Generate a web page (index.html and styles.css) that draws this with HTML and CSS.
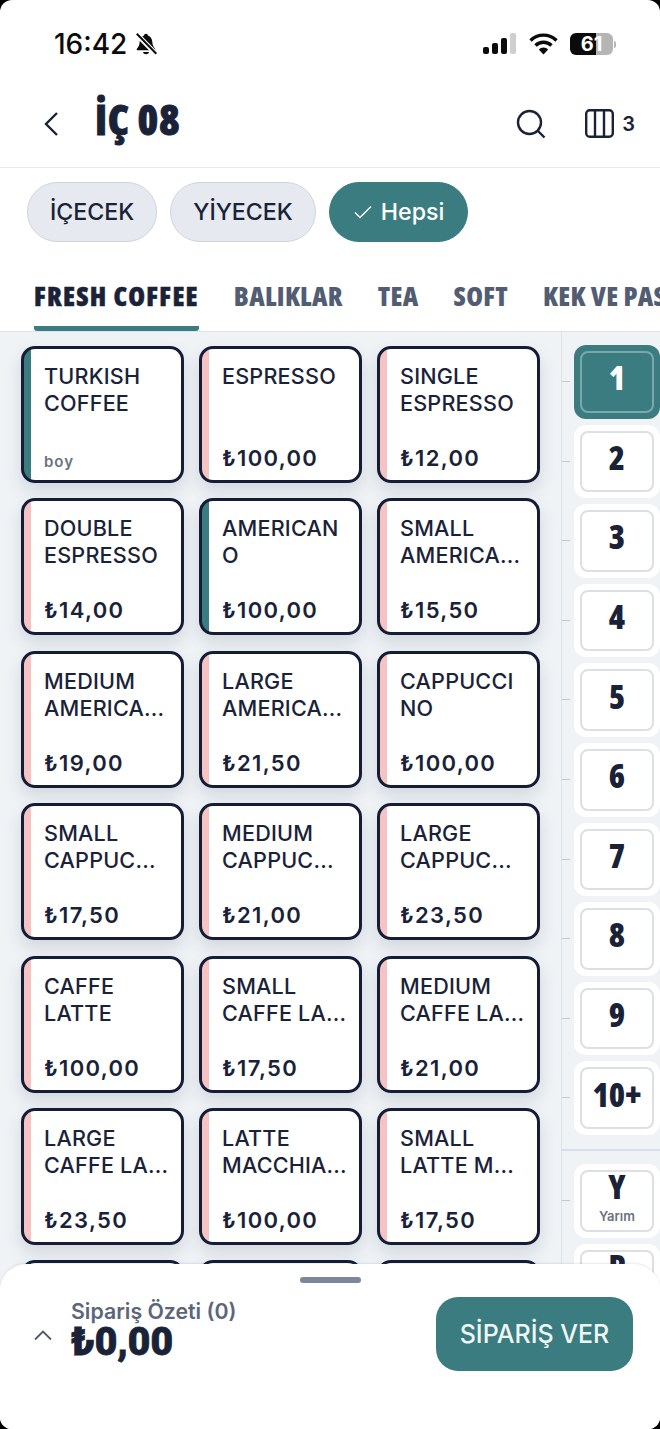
FILE: index.html
```html
<!DOCTYPE html>
<html>
<head>
    <meta charset="UTF-8">
    <title>İç 08</title>
    <link rel="stylesheet" href="styles.css">
</head>
<body>
<div class="phone">
    <div class="status-bar">
        <div class="status-left">
            <span class="time">16:42</span>
            <svg class="bell" width="26" height="26" viewBox="0 0 24 24">
                <path d="M12 2.500c-1 0-1.700.7-1.800 1.600C7.600 5 6.400 7.200 6.200 10c-.2 3.200-1 4.800-2.600 6.400-.5.600-.2 1.400.6 1.400h15.600c.8 0 1.100-.8.6-1.400-1.600-1.600-2.400-3.200-2.600-6.400-.2-2.800-1.400-5-4-5.900-.1-.9-.8-1.600-1.800-1.600z" fill="#0b0b0b"/>
                <path d="M9.200 19.400c.3 1.300 1.400 2.100 2.800 2.100s2.500-.8 2.800-2.100z" fill="#0b0b0b"/>
                <path d="M3 2.500 21.500 21.500" stroke="#fff" stroke-width="4.500"/>
                <path d="M3.500 2.500 21.500 21" stroke="#0b0b0b" stroke-width="1.800"/>
            </svg>
        </div>
        <div class="status-right">
            <svg width="35" height="22" viewBox="0 0 35 22">
                <rect x="1" y="14" width="6" height="7" rx="2" fill="#0b0b0b"/>
                <rect x="10" y="10" width="6" height="11" rx="2" fill="#0b0b0b"/>
                <rect x="19" y="5" width="6" height="16" rx="2" fill="#0b0b0b"/>
                <rect x="28" y="0" width="6" height="21" rx="2" fill="#cfcfcf"/>
            </svg>
            <svg width="29" height="22" viewBox="0 0 29 22">
                <path d="M1.500 7.500a18.500 18.500 0 0 1 26 0" fill="none" stroke="#0b0b0b" stroke-width="3.400"/>
                <path d="M6.500 12.500a11.500 11.500 0 0 1 16 0" fill="none" stroke="#0b0b0b" stroke-width="3.400"/>
                <path d="M14.500 21.500 9.800 16.500a6.800 6.800 0 0 1 9.400 0z" fill="#0b0b0b"/>
            </svg>
            <div class="battery"><span class="battery-level">61</span><i class="battery-tip"></i></div>
        </div>
    </div>

    <div class="top-bar">
        <svg class="back" width="18" height="26" viewBox="0 0 18 26">
            <path d="M14 2 3 13l11 11" fill="none" stroke="#1a2238" stroke-width="2.400"/>
        </svg>
        <h1 class="table-name">İÇ 08</h1>
        <svg class="search" width="30" height="30" viewBox="0 0 30 30">
            <circle cx="13.500" cy="13.500" r="11.500" fill="none" stroke="#1a2238" stroke-width="2.400"/>
            <path d="M22 22l6.500 6.500" stroke="#1a2238" stroke-width="2.400"/>
        </svg>
        <svg class="columns" width="29" height="29" viewBox="0 0 29 29">
            <rect x="1.200" y="1.200" width="26.600" height="26.600" rx="3.500" fill="none" stroke="#1a2238" stroke-width="2.400"/>
            <path d="M10 1v27M19 1v27" stroke="#1a2238" stroke-width="2.400"/>
        </svg>
        <span class="column-count">3</span>
    </div>

    <div class="chips">
        <div class="chip">İÇECEK</div>
        <div class="chip">YİYECEK</div>
        <div class="chip chip-active">
            <svg width="18" height="14" viewBox="0 0 18 14"><path d="M1 7.500 6 12.500 17 1.500" fill="none" stroke="#fff" stroke-width="1.400"/></svg>
            Hepsi
        </div>
    </div>

    <div class="tabs">
        <div class="tab tab-active">FRESH COFFEE</div>
        <div class="tab">BALIKLAR</div>
        <div class="tab">TEA</div>
        <div class="tab">SOFT</div>
        <div class="tab">KEK VE PAS</div>
    </div>

    <div class="content">
        <div class="products">
            <div class="card card-teal"><div class="card-name">TURKISH<br>COFFEE</div><div class="card-note">boy</div></div>
            <div class="card"><div class="card-name">ESPRESSO</div><div class="card-price">₺100,00</div></div>
            <div class="card"><div class="card-name">SINGLE<br>ESPRESSO</div><div class="card-price">₺12,00</div></div>

            <div class="card"><div class="card-name">DOUBLE<br>ESPRESSO</div><div class="card-price">₺14,00</div></div>
            <div class="card card-teal"><div class="card-name">AMERICAN<br>O</div><div class="card-price">₺100,00</div></div>
            <div class="card"><div class="card-name">SMALL<br>AMERICA...</div><div class="card-price">₺15,50</div></div>

            <div class="card"><div class="card-name">MEDIUM<br>AMERICA...</div><div class="card-price">₺19,00</div></div>
            <div class="card"><div class="card-name">LARGE<br>AMERICA...</div><div class="card-price">₺21,50</div></div>
            <div class="card"><div class="card-name">CAPPUCCI<br>NO</div><div class="card-price">₺100,00</div></div>

            <div class="card"><div class="card-name">SMALL<br>CAPPUC...</div><div class="card-price">₺17,50</div></div>
            <div class="card"><div class="card-name">MEDIUM<br>CAPPUC...</div><div class="card-price">₺21,00</div></div>
            <div class="card"><div class="card-name">LARGE<br>CAPPUC...</div><div class="card-price">₺23,50</div></div>

            <div class="card"><div class="card-name">CAFFE<br>LATTE</div><div class="card-price">₺100,00</div></div>
            <div class="card"><div class="card-name">SMALL<br>CAFFE LA...</div><div class="card-price">₺17,50</div></div>
            <div class="card"><div class="card-name">MEDIUM<br>CAFFE LA...</div><div class="card-price">₺21,00</div></div>

            <div class="card"><div class="card-name">LARGE<br>CAFFE LA...</div><div class="card-price">₺23,50</div></div>
            <div class="card"><div class="card-name">LATTE<br>MACCHIA...</div><div class="card-price">₺100,00</div></div>
            <div class="card"><div class="card-name">SMALL<br>LATTE M...</div><div class="card-price">₺17,50</div></div>

            <div class="card"></div>
            <div class="card"></div>
            <div class="card"></div>
        </div>

        <div class="side">
            <div class="qty-group">
                <div class="qty qty-active"><div class="qty-inner">1</div></div>
                <div class="qty"><div class="qty-inner">2</div></div>
                <div class="qty"><div class="qty-inner">3</div></div>
                <div class="qty"><div class="qty-inner">4</div></div>
                <div class="qty"><div class="qty-inner">5</div></div>
                <div class="qty"><div class="qty-inner">6</div></div>
                <div class="qty"><div class="qty-inner">7</div></div>
                <div class="qty"><div class="qty-inner">8</div></div>
                <div class="qty"><div class="qty-inner">9</div></div>
                <div class="qty"><div class="qty-inner">10+</div></div>
            </div>
            <div class="qty-group portions">
                <div class="qty"><div class="qty-inner qty-letter">Y<small>Yarım</small></div></div>
                <div class="qty"><div class="qty-inner qty-letter">P</div></div>
            </div>
        </div>
    </div>

    <div class="sheet">
        <div class="handle"></div>
        <div class="sheet-row">
            <svg class="chevron" width="20" height="12" viewBox="0 0 20 12"><path d="M2 10.500 10 2.500l8 8" fill="none" stroke="#4f5a70" stroke-width="1.800"/></svg>
            <div class="summary">
                <div class="summary-label">Sipariş Özeti (0)</div>
                <div class="summary-total">₺0,00</div>
            </div>
            <div class="order-button">SİPARİŞ VER</div>
        </div>
    </div>
</div>
</body>
</html>
```

FILE: styles.css
```css
html, body {
    margin: 0;
    padding: 0;
    background-color: #000;
}
.phone {
    position: relative;
    width: 660px;
    height: 1429px;
    overflow: hidden;
    border-radius: 12px;
    background-color: #fff;
    font-family: Inter, "Liberation Sans", sans-serif;
    color: #1a2238;
}

/* status bar */
.status-bar {
    display: flex;
    justify-content: space-between;
    align-items: center;
    height: 88px;
    padding: 0 44px 0 54px;
    box-sizing: border-box;
}
.status-left {
    display: flex;
    align-items: center;
    gap: 6px;
}
.time {
    font-size: 28px;
    font-weight: 500;
    color: #0b0b0b;
}
.status-right {
    display: flex;
    align-items: center;
    gap: 12px;
}
.battery {
    display: flex;
    align-items: center;
    gap: 1px;
}
.battery-level {
    width: 43px;
    height: 22px;
    border-radius: 6px;
    background: linear-gradient(to right, #0b0b0b 61%, #b5b5b5 61%);
    color: #fff;
    font-size: 20px;
    font-weight: 700;
    line-height: 22px;
    text-align: center;
}
.battery-tip {
    width: 2px;
    height: 7px;
    border-radius: 0 2px 2px 0;
    background-color: #b5b5b5;
}

/* title row */
.top-bar {
    display: flex;
    align-items: center;
    height: 71px;
    padding: 0 25px 8px 43px;
    border-bottom: 1px solid #e8eaec;
}
.back {
    margin-right: 34px;
}
.table-name {
    flex: 1;
    margin: 0 0 10px;
    font-family: "Open Sans", sans-serif;
    font-stretch: 75%;
    font-size: 42px;
    font-weight: 800;
    line-height: 48px;
    letter-spacing: 0.6px;
    -webkit-text-stroke: 0.8px #1a2238;
}
.search {
    margin-right: 39px;
}
.columns {
    margin-right: 8px;
}
.column-count {
    font-size: 20px;
    font-weight: 600;
}

/* filter chips */
.chips {
    display: flex;
    gap: 13px;
    padding: 14px 27px 0;
}
.chip {
    display: flex;
    align-items: center;
    gap: 9px;
    height: 60px;
    padding: 0 22px;
    box-sizing: border-box;
    border: 1px solid #cfd4dc;
    border-radius: 30px;
    background-color: #e6eaf0;
    font-size: 23.200px;
    font-weight: 500;
}
.chip-active {
    border-color: #3b7c80;
    background-color: #3b7c80;
    color: #fff;
    padding: 0 23px 0 24px;
}

/* category tabs */
.tabs {
    display: flex;
    gap: 35px;
    height: 90px;
    padding-left: 34px;
    box-sizing: border-box;
    overflow: hidden;
    border-bottom: 1px solid #dfe3e8;
    white-space: nowrap;
}
.tab {
    flex: none;
    height: 89px;
    padding-top: 38px;
    box-sizing: border-box;
    font-family: "Open Sans", sans-serif;
    font-stretch: 75%;
    font-size: 27px;
    line-height: 32px;
    font-weight: 800;
    letter-spacing: 0.3px;
    color: #525c72;
}
.tab-active {
    color: #1a2238;
    letter-spacing: 1.250px;
    -webkit-text-stroke: 0.5px #1a2238;
    border-bottom: 5px solid #3b7c80;
    border-radius: 0 0 3px 3px;
}

/* product grid + quantity column */
.content {
    display: flex;
    height: 1097px;
    background-color: #eff3f6;
}
.products {
    display: grid;
    grid-template-columns: repeat(3, 163px);
    grid-auto-rows: 137px;
    gap: 15.400px 15px;
    width: 540px;
    padding: 14px 0 0 21px;
    box-sizing: border-box;
    flex: none;
}
.card {
    display: flex;
    flex-direction: column;
    justify-content: space-between;
    padding: 14px 8px 8px 20px;
    box-sizing: border-box;
    border: 3px solid #141c36;
    border-radius: 14px;
    background: linear-gradient(to right, #f5c3c1 7px, #fff 7px);
    box-shadow: 0 8px 16px rgba(60, 72, 100, 0.16);
}
.card-teal {
    background: linear-gradient(to right, #3b7c80 7px, #fff 7px);
}
.card-name {
    font-size: 21.600px;
    line-height: 27px;
    font-weight: 500;
    letter-spacing: 0.2px;
    white-space: nowrap;
}
.card-price {
    font-size: 22px;
    line-height: 27px;
    font-weight: 600;
    letter-spacing: 1.300px;
}
.card-note {
    font-size: 15px;
    line-height: 20px;
    font-weight: 600;
    letter-spacing: 1px;
    color: #6b7280;
}
.side {
    flex: 1;
    margin-left: 21px;
    padding-top: 13px;
    border-left: 1px solid #e0e4e9;
}
.qty-group {
    display: flex;
    flex-direction: column;
    gap: 6px;
}
.portions {
    margin-top: 14px;
    margin-left: -1px;
    padding-top: 13px;
    border-top: 2px solid #d9dfe8;
}
.qty {
    position: relative;
    width: 86px;
    height: 73.600px;
    margin-left: 12px;
    padding: 6px;
    box-sizing: border-box;
    border-radius: 12px;
    background-color: #fff;
}
.portions .qty {
    margin-left: 13px;
}
.qty::before {
    content: "";
    position: absolute;
    left: -12px;
    top: 36px;
    width: 8px;
    height: 1px;
    background-color: #c4c9d0;
}
.qty-inner {
    display: flex;
    flex-direction: column;
    align-items: center;
    justify-content: center;
    height: 100%;
    padding-bottom: 8px;
    box-sizing: border-box;
    border: 2px solid #dcdfe3;
    border-radius: 8px;
    font-family: "Open Sans", sans-serif;
    font-stretch: 75%;
    font-size: 33px;
    font-weight: 800;
    color: #1a2238;
}
.qty-active {
    background-color: #3b7c80;
}
.qty-active .qty-inner {
    border-color: #7aa8ab;
    color: #fff;
}
.qty-letter {
    justify-content: flex-start;
    padding-bottom: 0;
    line-height: 29px;
}
.qty-letter small {
    margin-top: 7px;
    font-family: Inter, sans-serif;
    font-stretch: normal;
    font-size: 13px;
    line-height: 16px;
    font-weight: 600;
    color: #6b7280;
}

/* order summary sheet over the grid */
.sheet {
    position: absolute;
    left: 0;
    right: 0;
    bottom: 0;
    height: 165px;
    border-radius: 26px 26px 0 0;
    background-color: #fff;
    box-shadow: 0 -1px 2px rgba(60, 72, 100, 0.12);
}
.handle {
    width: 61px;
    height: 6px;
    margin: 13px auto 0;
    border-radius: 3px;
    background-color: #7c879c;
}
.sheet-row {
    display: flex;
    align-items: center;
    height: 74px;
    margin-top: 14px;
    padding: 0 27px 0 33px;
}
.chevron {
    margin-right: 18px;
    margin-top: 2px;
}
.summary {
    flex: 1;
    margin-top: -8px;
}
.summary-label {
    font-size: 21.300px;
    line-height: 24px;
    font-weight: 600;
    color: #5c667a;
}
.summary-total {
    font-family: Roboto, sans-serif;
    font-size: 39px;
    line-height: 38px;
    font-weight: 900;
    -webkit-text-stroke: 0.8px #1a2238;
}
.order-button {
    display: flex;
    align-items: center;
    justify-content: center;
    width: 197px;
    height: 74px;
    border-radius: 22px;
    background-color: #3b7c80;
    color: #eef6f6;
    font-size: 25px;
    font-weight: 500;
}
```
